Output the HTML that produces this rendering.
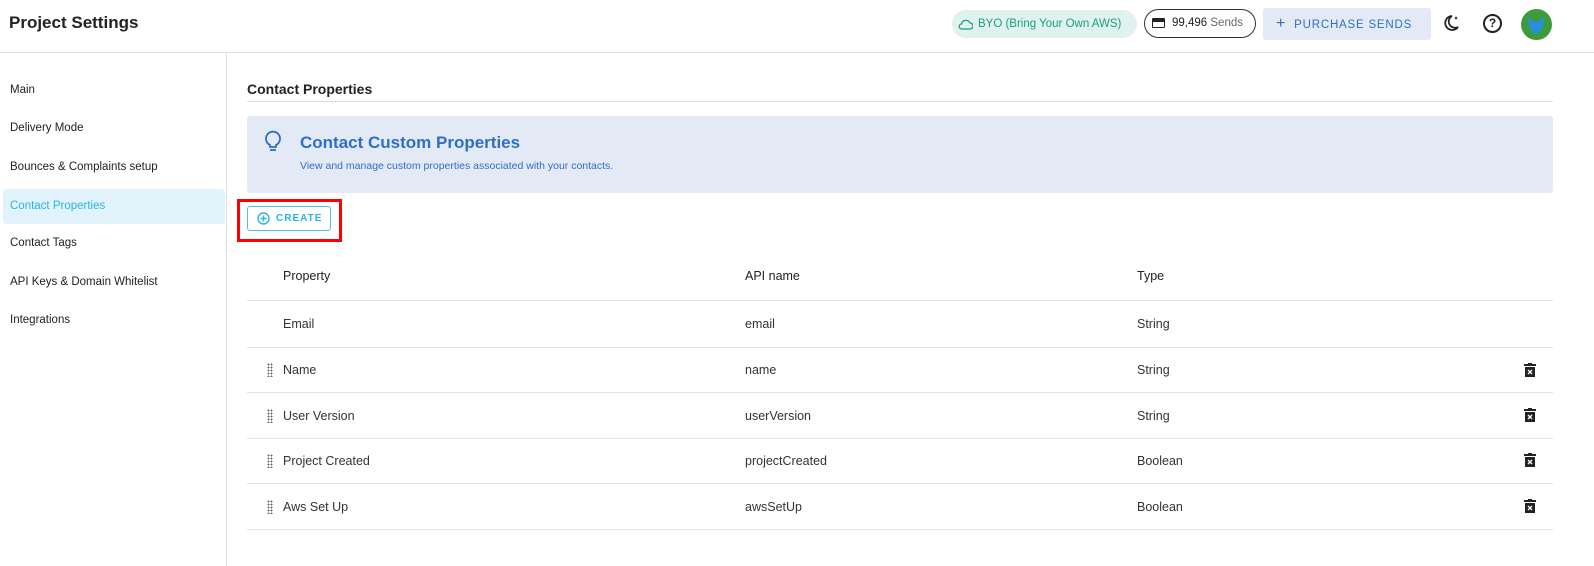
<!DOCTYPE html>
<html><head><meta charset="utf-8"><style>
*{box-sizing:border-box;margin:0;padding:0}
body{width:1594px;height:566px;overflow:hidden;background:#fff;font-family:"Liberation Sans",sans-serif;color:#222;position:relative}
.abs{position:absolute}
.hdr{left:0;top:0;width:1594px;height:53px;border-bottom:1px solid #ddd}
.side{left:0;top:53px;width:227px;height:513px;border-right:1px solid #e0e0e0}
.nav{position:absolute;left:3px;width:222px;height:35px;font-size:11.5px;padding-left:7px;line-height:35px;color:#222}
.row{position:absolute;left:247px;width:1306px;border-bottom:1px solid #e2e2e2;font-size:12.5px;color:#333}
.row span{position:absolute;top:50%;transform:translateY(-50%)}
.grip{left:20px;width:6px;height:14px;background-image:radial-gradient(circle,#666 0.8px,transparent 1px);background-size:3px 3px}
.bin{left:1277px;width:12px;height:14px}
</style></head><body>
<div class="abs hdr"></div>
<div class="abs" style="left:9px;top:13px;font-size:17px;font-weight:bold;color:#222">Project Settings</div>
<div class="abs" style="left:952px;top:10px;width:185px;height:28px;border-radius:14px;background:#dff2ee;color:#1a9e7f;font-size:11.5px;line-height:28px;padding-left:26px">BYO (Bring Your Own AWS)
<svg class="abs" style="left:6px;top:8px" width="15" height="12" viewBox="0 0 15 12"><path d="M4 11h8a3 3 0 0 0 0-6 4.5 4.5 0 0 0-8.5 1A2.5 2.5 0 0 0 4 11z" fill="none" stroke="#1a9e7f" stroke-width="1.3"/></svg></div>
<div class="abs" style="left:1144px;top:9px;width:112px;height:29px;border-radius:15px;border:1.3px solid #333;font-size:11.5px;line-height:27px;padding-left:27px;color:#222">99,496 <span style="color:#666">Sends</span>
<div class="abs" style="left:7px;top:8px;width:13px;height:10px;border:1.5px solid #222;border-radius:1px;border-top-width:4px"></div></div>
<div class="abs" style="left:1263px;top:8px;width:168px;height:32px;background:#e3eaf6;border-radius:3px;color:#2f6fc6;font-size:11.5px;letter-spacing:0.8px;line-height:32px;padding-left:13px;white-space:nowrap"><span style="font-size:16px;margin-right:8px">+</span>PURCHASE SENDS</div>
<svg class="abs" style="left:1444px;top:14px" width="16" height="18" viewBox="0 0 16 18"><path d="M8 2a7 7 0 1 0 6 11A6 6 0 0 1 8 2z" fill="none" stroke="#222" stroke-width="1.8"/><path d="M12 2l.6 1.4L14 4l-1.4.6L12 6l-.6-1.4L10 4l1.4-.6z" fill="#222"/></svg>
<div class="abs" style="left:1483px;top:14px;width:19px;height:19px;border:2px solid #222;border-radius:50%;font-size:12px;font-weight:bold;text-align:center;line-height:15px">?</div>
<div class="abs" style="left:1521px;top:9px;width:31px;height:31px;border-radius:50%;background:#3c9b3a;overflow:hidden"><svg width="31" height="31"><path d="M6 8l9 5 9-5-3 12-6 6-6-6z" fill="#2a8fd8"/></svg></div>
<div class="abs side"></div>
<div class="nav" style="top:73px">Main</div>
<div class="nav" style="top:111px">Delivery Mode</div>
<div class="nav" style="top:150px">Bounces &amp; Complaints setup</div>
<div class="nav" style="top:189px;background:#e1f4fc;color:#29b3ea;border-radius:3px">Contact Properties</div>
<div class="nav" style="top:226px">Contact Tags</div>
<div class="nav" style="top:265px">API Keys &amp; Domain Whitelist</div>
<div class="nav" style="top:303px">Integrations</div>
<div class="abs" style="left:247px;top:81px;font-size:14px;font-weight:bold;color:#222">Contact Properties</div>
<div class="abs" style="left:247px;top:101px;width:1306px;height:1px;background:#ddd"></div>
<div class="abs" style="left:247px;top:116px;width:1306px;height:77px;background:#e3eaf5;border-radius:3px"></div>
<svg class="abs" style="left:264px;top:130px" width="18" height="24" viewBox="0 0 18 24"><path d="M6 17v-2a7 7 0 1 1 6 0v2z" fill="none" stroke="#2f6fc6" stroke-width="1.8" stroke-linejoin="round"/><path d="M6 20h6" stroke="#2f6fc6" stroke-width="1.8"/></svg>
<div class="abs" style="left:300px;top:133px;font-size:17px;font-weight:bold;color:#2f6fc6">Contact Custom Properties</div>
<div class="abs" style="left:300px;top:160px;font-size:10.5px;color:#2f6fc6">View and manage custom properties associated with your contacts.</div>
<div class="abs" style="left:237px;top:199px;width:105px;height:43px;border:3px solid #f00"></div>
<div class="abs" style="left:247px;top:206px;width:84px;height:25px;border:1px solid #4fbfea;border-radius:3px;color:#29b3ea;font-size:10px;font-weight:bold;letter-spacing:1px;line-height:23px;padding-left:28px">CREATE
<svg class="abs" style="left:9px;top:5px" width="13" height="13" viewBox="0 0 13 13"><circle cx="6.5" cy="6.5" r="5.5" fill="none" stroke="#29b3ea" stroke-width="1.4"/><path d="M6.5 3.5v6M3.5 6.5h6" stroke="#29b3ea" stroke-width="1.4"/></svg></div>
<div class="row" style="top:252px;height:49px;color:#222"><span style="left:36px">Property</span><span style="left:498px">API name</span><span style="left:890px">Type</span></div>
<div class="row" style="top:301px;height:47px"><span style="left:36px">Email</span><span style="left:498px">email</span><span style="left:890px">String</span></div>
<div class="row" style="top:348px;height:45px"><span class="grip"></span><span style="left:36px">Name</span><span style="left:498px">name</span><span style="left:890px">String</span><svg class="abs bin" style="top:15px" viewBox="0 0 12 14"><path d="M4 0h4v1h4v2H0V1h4z M1 4h10v10H1z" fill="#222"/><path d="M4 7l4 4M8 7l-4 4" stroke="#fff" stroke-width="1.3"/></svg></div>
<div class="row" style="top:393px;height:46px"><span class="grip"></span><span style="left:36px">User Version</span><span style="left:498px">userVersion</span><span style="left:890px">String</span><svg class="abs bin" style="top:15px" viewBox="0 0 12 14"><path d="M4 0h4v1h4v2H0V1h4z M1 4h10v10H1z" fill="#222"/><path d="M4 7l4 4M8 7l-4 4" stroke="#fff" stroke-width="1.3"/></svg></div>
<div class="row" style="top:439px;height:45px"><span class="grip"></span><span style="left:36px">Project Created</span><span style="left:498px">projectCreated</span><span style="left:890px">Boolean</span><svg class="abs bin" style="top:14px" viewBox="0 0 12 14"><path d="M4 0h4v1h4v2H0V1h4z M1 4h10v10H1z" fill="#222"/><path d="M4 7l4 4M8 7l-4 4" stroke="#fff" stroke-width="1.3"/></svg></div>
<div class="row" style="top:484px;height:46px"><span class="grip"></span><span style="left:36px">Aws Set Up</span><span style="left:498px">awsSetUp</span><span style="left:890px">Boolean</span><svg class="abs bin" style="top:15px" viewBox="0 0 12 14"><path d="M4 0h4v1h4v2H0V1h4z M1 4h10v10H1z" fill="#222"/><path d="M4 7l4 4M8 7l-4 4" stroke="#fff" stroke-width="1.3"/></svg></div>
</body></html>
